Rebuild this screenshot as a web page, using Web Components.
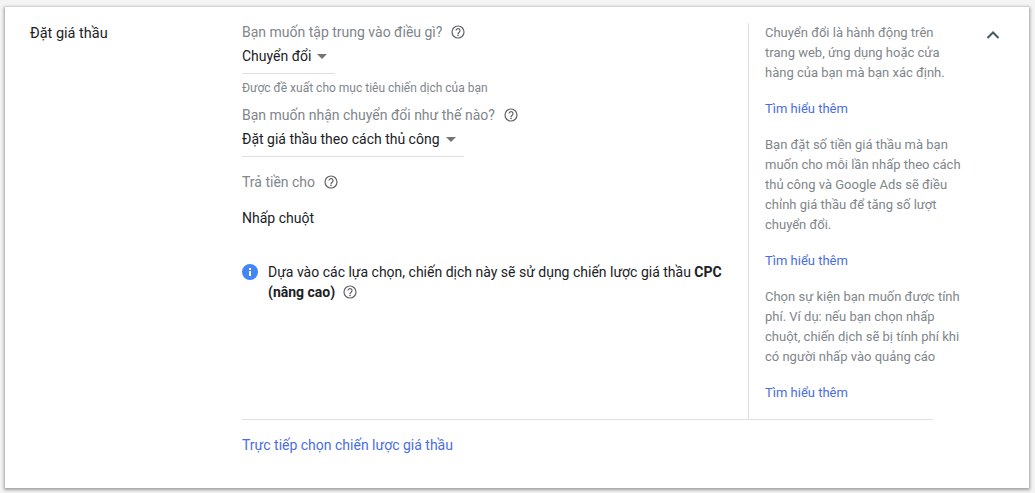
<!DOCTYPE html>
<html lang="vi">
<head>
<meta charset="utf-8">
<title>Đặt giá thầu</title>
<style>
html, body { margin: 0; height: 100%; }
body {
  background: #f4f4f4;
  box-sizing: border-box;
  height: 493px;
  padding: 7px 6px 5px 5px;
  overflow: hidden;
  font-family: Roboto, "Liberation Sans", sans-serif;
  font-size: 14px;
  color: #202124;
}
</style>
</head>
<body>
<bid-card heading="Đặt giá thầu">
  <bid-field label="Bạn muốn tập trung vào điều gì?" value="Chuyển đổi" hint="Được đề xuất cho mục tiêu chiến dịch của bạn" style="--line:93px"></bid-field>
  <bid-field label="Bạn muốn nhận chuyển đổi như thế nào?" value="Đặt giá thầu theo cách thủ công" style="--line:222px;margin-top:9px"></bid-field>
  <pay-for label="Trả tiền cho" value="Nhấp chuột"></pay-for>
  <info-note>Dựa vào các lựa chọn, chiến dịch này sẽ sử dụng chiến lược giá thầu <b>CPC</b> <b>(nâng cao)</b></info-note>

  <side-note slot="side" more="Tìm hiểu thêm">Chuyển đổi là hành động trên trang web, ứng dụng hoặc cửa hàng của bạn mà bạn xác định.</side-note>
  <side-note slot="side" more="Tìm hiểu thêm">Bạn đặt số tiền giá thầu mà bạn muốn cho mỗi lần nhấp theo cách thủ công và Google Ads sẽ điều chỉnh giá thầu để tăng số lượt chuyển đổi.</side-note>
  <side-note slot="side" more="Tìm hiểu thêm">Chọn sự kiện bạn muốn được tính phí. Ví dụ: nếu bạn chọn nhấp chuột, chiến dịch sẽ bị tính phí khi có người nhấp vào quảng cáo</side-note>

  <span slot="footer">Trực tiếp chọn chiến lược giá thầu</span>
</bid-card>

<script>
// question mark in a ring, same one next to every label
class HelpIcon extends HTMLElement {
  constructor () {
    super()
    this.attachShadow({ mode: 'open' }).innerHTML = `
      <style>
        :host { display: inline-flex; width: 14px; height: 14px; }
        svg { display: block; }
      </style>
      <svg width="14" height="14" viewBox="0 0 14 14" fill="none" stroke="#5f6368">
        <circle cx="7" cy="7" r="6" stroke-width="1.2"/>
        <path d="M5 5.6a2 2 0 1 1 3.2 1.6c-.8.6-1.2.9-1.2 1.7" stroke-width="1.2"/>
        <circle cx="7" cy="10.4" r=".8" fill="#5f6368" stroke="none"/>
      </svg>`
  }
}
customElements.define('help-icon', HelpIcon)

class BidField extends HTMLElement {
  connectedCallback () {
    const hint = this.getAttribute('hint')
    this.attachShadow({ mode: 'open' }).innerHTML = `
      <style>
        :host { display: block; }
        .label { display: flex; align-items: center; gap: 9px; height: 20px; color: #80868b; }
        .select { display: flex; align-items: center; gap: 6px; height: 20px; margin-top: 4px; color: #202124; }
        .arrow { width: 0; height: 0; border: 5px solid transparent; border-top-color: #757575; border-bottom: 0; }
        .line { width: var(--line); height: 1px; background: #e0e0e0; margin-top: 7px; }
        .hint { font-size: 12px; line-height: 16px; color: #80868b; margin-top: 6px; }
      </style>
      <div class="label">${this.getAttribute('label')}<help-icon></help-icon></div>
      <div class="select">${this.getAttribute('value')}<span class="arrow"></span></div>
      <div class="line"></div>
      ${hint ? `<div class="hint">${hint}</div>` : ''}`
  }
}
customElements.define('bid-field', BidField)

class PayFor extends HTMLElement {
  connectedCallback () {
    this.attachShadow({ mode: 'open' }).innerHTML = `
      <style>
        :host { display: block; margin-top: 15px; }
        .label { display: flex; align-items: center; gap: 9px; height: 20px; color: #80868b; }
        .value { line-height: 20px; margin-top: 16px; color: #202124; }
      </style>
      <div class="label">${this.getAttribute('label')}<help-icon></help-icon></div>
      <div class="value">${this.getAttribute('value')}</div>`
  }
}
customElements.define('pay-for', PayFor)

class InfoNote extends HTMLElement {
  constructor () {
    super()
    this.attachShadow({ mode: 'open' }).innerHTML = `
      <style>
        :host { display: flex; gap: 10px; margin-top: 34px; width: 490px; line-height: 20px; color: #202124; }
        svg { flex: none; margin-top: 2px; }
        help-icon { vertical-align: -2px; margin-left: 8px; }
        ::slotted(b) { font-weight: 700; }
      </style>
      <svg width="16" height="16" viewBox="0 0 16 16">
        <circle cx="8" cy="8" r="8" fill="#4285f4"/>
        <rect x="7" y="7" width="2" height="5" fill="#fff"/>
        <rect x="7" y="4" width="2" height="2" fill="#fff"/>
      </svg>
      <div><slot></slot><help-icon></help-icon></div>`
  }
}
customElements.define('info-note', InfoNote)

class SideNote extends HTMLElement {
  connectedCallback () {
    this.attachShadow({ mode: 'open' }).innerHTML = `
      <style>
        :host { display: block; font-size: 13px; line-height: 20px; color: #80868b; }
        a { display: block; margin-top: 16px; color: #4a6ee0; text-decoration: none; }
      </style>
      <div><slot></slot></div>
      <a href="#">${this.getAttribute('more')}</a>`
  }
}
customElements.define('side-note', SideNote)

class BidCard extends HTMLElement {
  connectedCallback () {
    this.attachShadow({ mode: 'open' }).innerHTML = `
      <style>
        :host {
          display: block;
          box-sizing: border-box;
          height: 100%;
          background: #fff;
          box-shadow: 0 1px 3px 1px rgba(0,0,0,.35);
          padding: 15px 0 0 25px;
        }
        .top { display: flex; }
        .title { width: 212px; flex: none; font-size: 14.5px; line-height: 20px; margin-top: 2px; color: #202124; }
        .content { width: 723px; flex: none; }
        .row { display: flex; height: 397px; }
        .main { width: 506px; flex: none; }
        .side { width: 217px; flex: none; box-sizing: border-box; height: 396px; margin-top: 1px; border-left: 1px solid #e0e0e0; padding-left: 16px; }
        .side-inner { display: flex; flex-direction: column; gap: 16px; }
        .rule { width: 691px; height: 1px; background: #e0e0e0; }
        .chev { margin: 9px 0 0 21px; flex: none; }
        .foot { margin-top: 15px; line-height: 20px; color: #4a6ee0; }
      </style>
      <div class="top">
        <div class="title">${this.getAttribute('heading')}</div>
        <div class="content">
          <div class="row">
            <div class="main"><slot></slot></div>
            <div class="side"><div class="side-inner"><slot name="side"></slot></div></div>
          </div>
          <div class="rule"></div>
          <div class="foot"><slot name="footer"></slot></div>
        </div>
        <svg class="chev" width="14" height="8" viewBox="0 0 14 8" fill="none" stroke="#455a64" stroke-width="2"><path d="M1.5 7l5.5-5.5 5.5 5.5"/></svg>
      </div>`
  }
}
customElements.define('bid-card', BidCard)
</script>
</body>
</html>
